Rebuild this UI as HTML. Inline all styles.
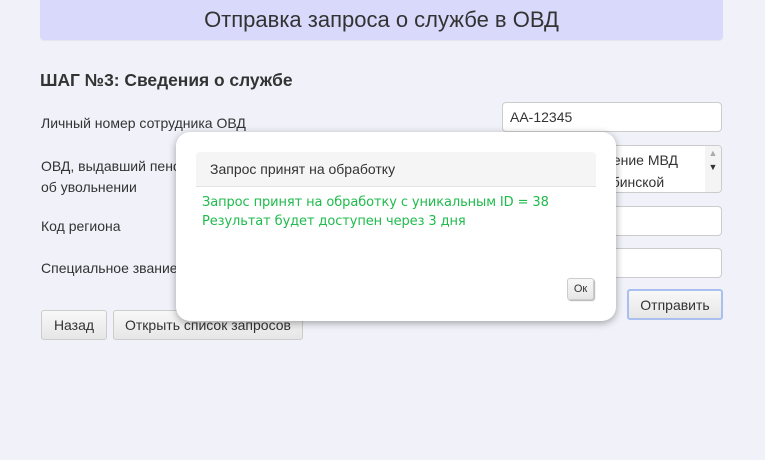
<!DOCTYPE html>
<html><head><meta charset="utf-8"><style>
*{box-sizing:border-box;margin:0;padding:0}
body{width:765px;height:460px;background:#f1f1f9;font-family:"Liberation Sans",sans-serif;color:#333;position:relative;overflow:hidden}
.a{position:absolute}
.hdr{left:40px;top:0;width:683px;height:40px;background:#d9d9fb;border-radius:0 0 4px 4px;text-align:center;font-size:22px;line-height:40px;color:#333;box-shadow:0 1px 1px rgba(0,0,0,.05)}
.lbl{font-size:14px;left:41px}
.inp{left:502px;width:220px;background:#fff;border:1px solid #ccc;border-radius:4px;font-size:14px;padding-left:7px}
.btn{background:linear-gradient(#f8f8f8,#e6e6e6);border:1px solid #ccc;border-radius:3px;font-size:14px;text-align:center}
</style></head><body>
<div class="a hdr">Отправка запроса о службе в ОВД</div>
<div class="a" style="left:40px;top:70px;font-size:17.4px;font-weight:bold">ШАГ №3: Сведения о службе</div>
<div class="a lbl" style="top:115px">Личный номер сотрудника ОВД</div>
<div class="a lbl" style="top:156px;line-height:21px">ОВД, выдавший пенсионное<br>об увольнении</div>
<div class="a lbl" style="top:218px">Код региона</div>
<div class="a lbl" style="top:260px">Специальное звание</div>
<div class="a inp" style="top:102px;height:30px;line-height:28px">АА-12345</div>
<div class="a inp" style="top:145px;height:48px;overflow:hidden">
<div class="a" style="left:7px;top:3px;line-height:22px;white-space:nowrap">Главное управление МВД<br>России по Челябинской</div>
<div class="a" style="right:0;top:0;width:16px;height:46px;background:#f4f4f4;font-size:9px;color:#aaa;text-align:center;line-height:14px">▲<br><span style="color:#333">▼</span></div></div>
<div class="a inp" style="top:206px;height:30px"></div>
<div class="a inp" style="top:248px;height:30px"></div>
<div class="a btn" style="left:41px;top:310px;width:66px;height:30px;line-height:28px">Назад</div>
<div class="a btn" style="left:113px;top:310px;width:190px;height:30px;line-height:28px">Открыть список запросов</div>
<div class="a btn" style="left:627px;top:289px;width:96px;height:31px;line-height:28px;border:2px solid #a9c0ee">Отправить</div>
<div class="a" style="left:176px;top:132px;width:440px;height:189px;background:#fff;border-radius:14px;box-shadow:0 2px 8px rgba(0,0,0,.35)">
<div class="a" style="left:20px;top:20px;width:400px;height:35px;background:#f5f5f5;border-bottom:1px solid #e3e3e3;border-radius:4px 4px 0 0;font-size:14px;line-height:35px;padding-left:14px">Запрос принят на обработку</div>
<div class="a" style="left:26px;top:61px;font-family:'DejaVu Sans',sans-serif;font-size:13px;line-height:19px;color:#1fbb4c;letter-spacing:-0.1px;white-space:nowrap">Запрос принят на обработку с уникальным ID = 38<br>Результат будет доступен через 3 дня</div>
<div class="a btn" style="left:391px;top:146px;width:27px;height:22px;font-size:11px;line-height:20px;box-shadow:1px 1px 1px rgba(0,0,0,.3)">Ок</div>
</div>
</body></html>
